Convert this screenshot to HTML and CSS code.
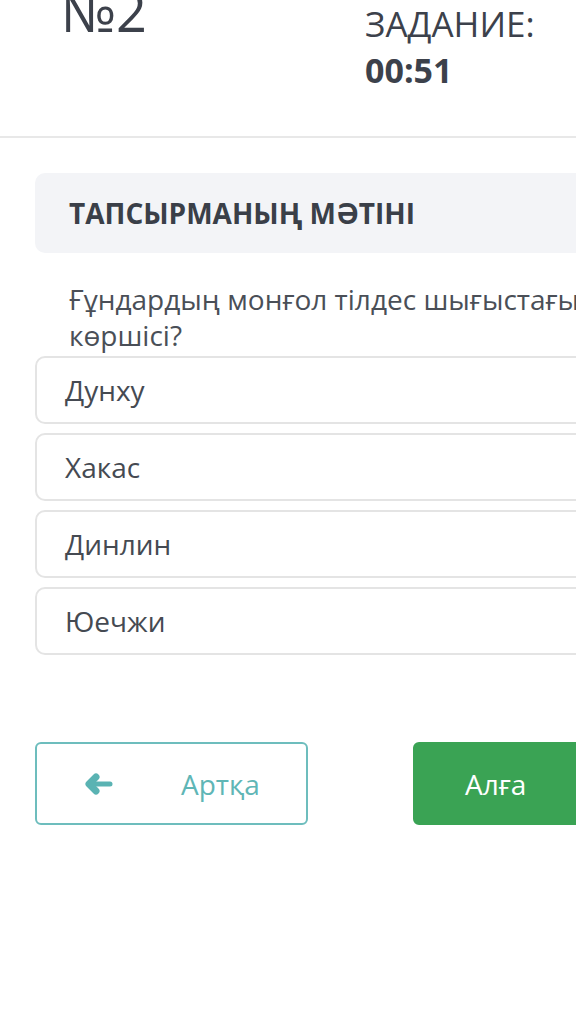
FILE: index.html
```html
<!DOCTYPE html>
<html lang="kk">
<head>
<meta charset="utf-8">
<title>Тапсырма №2</title>
<link rel="stylesheet" href="styles.css">
</head>
<body>
<div class="page">
  <header class="head">
    <div class="num">№2</div>
    <div class="timer">
      <div class="timer-label">ЗАДАНИЕ:</div>
      <div class="timer-value">00:51</div>
    </div>
  </header>

  <section class="card">
    <h2 class="card-title">ТАПСЫРМАНЫҢ МӘТІНІ</h2>
  </section>

  <p class="question">Ғұндардың монғол тілдес шығыстағы<br>көршісі?</p>

  <ul class="options">
    <li class="option">Дунху</li>
    <li class="option">Хакас</li>
    <li class="option">Динлин</li>
    <li class="option">Юечжи</li>
  </ul>

  <nav class="nav">
    <button class="btn btn-back">
      <svg class="arrow" viewBox="0 0 28 22" width="28" height="22" aria-hidden="true">
        <path d="M11 4 L4 11 L11 18" fill="none" stroke="currentColor" stroke-width="7" stroke-linecap="round" stroke-linejoin="round"/>
        <path d="M6 11 H25" fill="none" stroke="currentColor" stroke-width="5" stroke-linecap="round"/>
      </svg>
      <span>Артқа</span>
    </button>
    <button class="btn btn-next">
      <span>Алға</span>
    </button>
  </nav>
</div>
</body>
</html>
```

FILE: styles.css
```css
html, body {
  margin: 0;
  padding: 0;
  background: #ffffff;
  overflow: hidden;
}

body {
  width: 576px;
  height: 1010px;
  font-family: "Open Sans", "Noto Sans", sans-serif;
  color: #3c414b;
}

.page {
  width: 800px;
}

.head {
  display: grid;
  grid-template-columns: 304px auto;
  padding-left: 61px;
  height: 136px;
  border-bottom: 2px solid #e8e8e8;
  align-items: start;
}

.num {
  font-size: 54px;
  line-height: 54px;
  margin-top: -16px;
  color: #3c414b;
}

.timer {
  padding-top: 1px;
}

.timer-label {
  font-size: 35px;
  line-height: 46px;
}

.timer-value {
  font-size: 34px;
  line-height: 46px;
  font-weight: 700;
}

.card {
  margin: 35px 0 0 35px;
  height: 80px;
  background: #f3f4f7;
  border-radius: 10px;
  display: flex;
  align-items: center;
  padding-left: 34px;
}

.card-title {
  margin: 0;
  font-size: 28px;
  font-weight: 700;
  color: #3a3f48;
}

.question {
  margin: 28px 0 0 69px;
  font-size: 28px;
  line-height: 36px;
  color: #4a4f57;
}

.options {
  list-style: none;
  margin: 3px 0 0 35px;
  padding: 0;
  display: flex;
  flex-direction: column;
  gap: 9px;
}

.option {
  height: 68px;
  box-sizing: border-box;
  border: 2px solid #e4e4e4;
  border-radius: 10px;
  display: flex;
  align-items: center;
  padding-left: 28px;
  font-size: 28px;
  color: #454a52;
}

.nav {
  display: flex;
  gap: 105px;
  margin: 87px 0 0 35px;
}

.btn {
  width: 273px;
  height: 83px;
  box-sizing: border-box;
  border-radius: 6px;
  font-family: "Open Sans", "Noto Sans", sans-serif;
  font-size: 28px;
  display: flex;
  align-items: center;
  padding: 0;
  cursor: pointer;
}

.btn-back {
  background: #ffffff;
  border: 2px solid #6dbdbd;
  color: #5fb6b6;
  padding-left: 48px;
  gap: 68px;
}

.arrow {
  display: block;
  color: #5ab3b3;
}

.btn-next {
  background: #3aa354;
  border: 2px solid #3aa354;
  color: #ffffff;
  padding-left: 50px;
}
```
